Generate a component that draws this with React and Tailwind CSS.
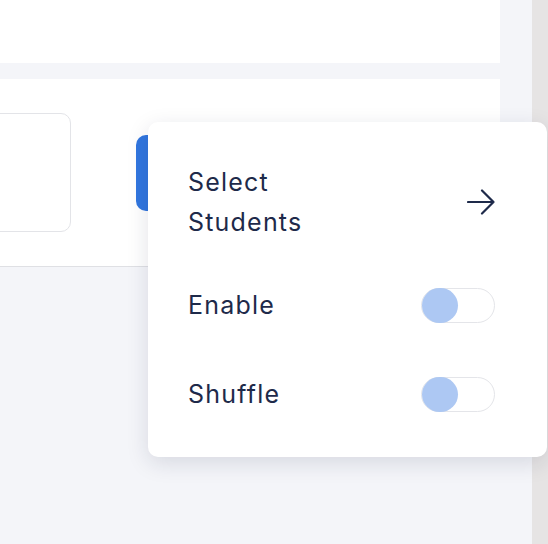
import { useState } from 'react'

function Toggle({ on, onChange }) {
  return (
    <button
      onClick={onChange}
      className={`flex h-[35px] w-[74px] items-center rounded-full border border-[#e4e5e9] bg-white ${
        on ? 'justify-end' : 'justify-start'
      }`}
    >
      <span className="block h-[35px] w-[36px] -my-px rounded-full bg-[#adc8f3]" />
    </button>
  )
}

function ArrowRight() {
  return (
    <svg width="28" height="26" viewBox="0 0 28 26" fill="none" stroke="#1e2a4a" strokeWidth="2.2" strokeLinecap="round" strokeLinejoin="round">
      <path d="M1 13H26.5M15 1.5L26.5 13L15 24.5" />
    </svg>
  )
}

export default function App() {
  const [enable, setEnable] = useState(false)
  const [shuffle, setShuffle] = useState(false)

  return (
    <div className="relative h-[544px] w-[548px] overflow-hidden bg-[#f4f5f9] font-['Inter',sans-serif] text-[#1e2a4a]">
      <div className="flex h-full">
        <div className="flex w-[500px] flex-col">
          {/* top card */}
          <div className="h-[63px] bg-white" />
          {/* second card */}
          <div className="mt-[16px] flex h-[188px] items-center border-b border-[#dfe0e4] bg-white">
            <div className="-ml-[10px] h-[119px] w-[81px] rounded-[10px] border-[1.5px] border-[#e3e4e8] bg-white" />
            <button className="ml-[65px] h-[76px] w-[160px] rounded-[10px] bg-[#3176df]" />
          </div>
        </div>
        <div className="w-[32px]" />
        <div className="w-[16px] bg-[#e6e4e4]" />
      </div>

      {/* popover menu */}
      <div className="absolute left-[148px] top-[122px] w-[399px] rounded-[10px] bg-white pl-[40px] pr-[52px] pt-[40px] pb-[45px] shadow-[0_6px_22px_rgba(20,30,60,0.13)]">
        <button className="flex h-[80px] w-full items-center justify-between text-left">
          <span className="text-[25px] leading-[40px] tracking-[1.2px]">
            Select
            <br />
            Students
          </span>
          <ArrowRight />
        </button>
        <div className="mt-[46px] flex h-[35px] items-center justify-between">
          <span className="text-[25px] tracking-[1.2px]">Enable</span>
          <Toggle on={enable} onChange={() => setEnable(!enable)} />
        </div>
        <div className="mt-[54px] flex h-[35px] items-center justify-between">
          <span className="text-[25px] tracking-[1.2px]">Shuffle</span>
          <Toggle on={shuffle} onChange={() => setShuffle(!shuffle)} />
        </div>
      </div>
    </div>
  )
}
